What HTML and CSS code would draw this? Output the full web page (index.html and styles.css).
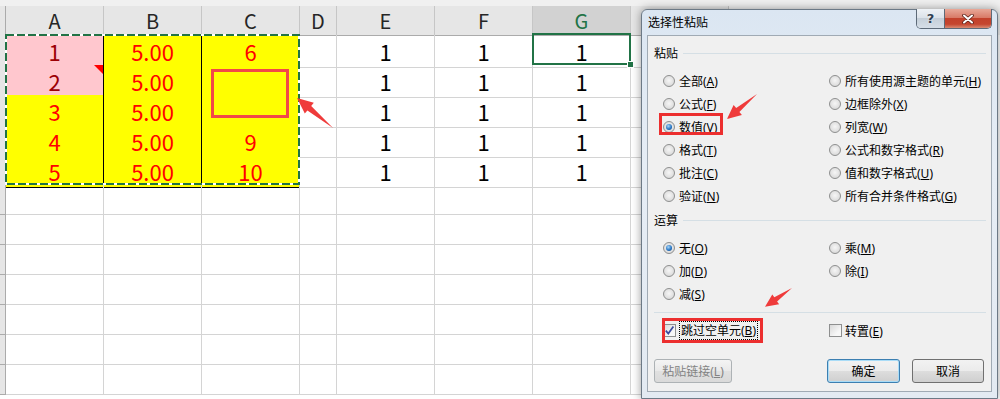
FILE: index.html
```html
<!DOCTYPE html>
<html lang="zh-CN">
<head>
  <meta charset="UTF-8" />
  <title>选择性粘贴</title>
  <link rel="stylesheet" href="styles.css">
</head>
<body>
  <div class="sheet">
    <div class="row head">
      <div class="rh"></div><div>A</div><div>B</div><div>C</div><div>D</div><div>E</div><div>F</div><div class="sel">G</div><div></div>
    </div>
    <div class="row">
      <div class="rh"></div><div class="p">1</div><div class="y">5.00</div><div class="y">6</div><div></div><div>1</div><div>1</div><div class="cur">1</div><div></div>
    </div>
    <div class="row">
      <div class="rh"></div><div class="p note">2</div><div class="y">5.00</div><div class="y"></div><div></div><div>1</div><div>1</div><div>1</div><div></div>
    </div>
    <div class="row">
      <div class="rh"></div><div class="y">3</div><div class="y">5.00</div><div class="y"></div><div></div><div>1</div><div>1</div><div>1</div><div></div>
    </div>
    <div class="row">
      <div class="rh"></div><div class="y">4</div><div class="y">5.00</div><div class="y">9</div><div></div><div>1</div><div>1</div><div>1</div><div></div>
    </div>
    <div class="row">
      <div class="rh"></div><div class="y">5</div><div class="y">5.00</div><div class="y">10</div><div></div><div>1</div><div>1</div><div>1</div><div></div>
    </div>
    <div class="row"><div class="rh"></div><div></div><div></div><div></div><div></div><div></div><div></div><div></div><div></div></div>
    <div class="row"><div class="rh"></div><div></div><div></div><div></div><div></div><div></div><div></div><div></div><div></div></div>
    <div class="row"><div class="rh"></div><div></div><div></div><div></div><div></div><div></div><div></div><div></div><div></div></div>
    <div class="row"><div class="rh"></div><div></div><div></div><div></div><div></div><div></div><div></div><div></div><div></div></div>
    <div class="row"><div class="rh"></div><div></div><div></div><div></div><div></div><div></div><div></div><div></div><div></div></div>
    <div class="row"><div class="rh"></div><div></div><div></div><div></div><div></div><div></div><div></div><div></div><div></div></div>
    <div class="row"><div class="rh"></div><div></div><div></div><div></div><div></div><div></div><div></div><div></div><div></div></div>
  </div>

  <div class="dlg">
    <div class="dlg-title">
      <span class="dlg-caption">选择性粘贴</span>
      <div class="dlg-ctrl">
        <span class="btn-help">?</span>
        <span class="btn-close">
          <svg width="12" height="10" viewBox="0 0 12 10">
            <path d="M2 1.5 L10 8.5 M10 1.5 L2 8.5" stroke="#5b2219" stroke-width="3.6" stroke-linecap="round"/>
            <path d="M2 1.5 L10 8.5 M10 1.5 L2 8.5" stroke="#fff" stroke-width="2" stroke-linecap="round"/>
          </svg>
        </span>
      </div>
    </div>
    <div class="dlg-body">
      <div class="grp"><span>粘贴</span></div>
      <div class="opts">
        <label class="opt"><i class="radio"></i><span>全部(<u>A</u>)</span></label>
        <label class="opt"><i class="radio"></i><span>所有使用源主题的单元(<u>H</u>)</span></label>
        <label class="opt"><i class="radio"></i><span>公式(<u>F</u>)</span></label>
        <label class="opt"><i class="radio"></i><span>边框除外(<u>X</u>)</span></label>
        <label class="opt"><i class="radio on"></i><span>数值(<u>V</u>)</span></label>
        <label class="opt"><i class="radio"></i><span>列宽(<u>W</u>)</span></label>
        <label class="opt"><i class="radio"></i><span>格式(<u>T</u>)</span></label>
        <label class="opt"><i class="radio"></i><span>公式和数字格式(<u>R</u>)</span></label>
        <label class="opt"><i class="radio"></i><span>批注(<u>C</u>)</span></label>
        <label class="opt"><i class="radio"></i><span>值和数字格式(<u>U</u>)</span></label>
        <label class="opt"><i class="radio"></i><span>验证(<u>N</u>)</span></label>
        <label class="opt"><i class="radio"></i><span>所有合并条件格式(<u>G</u>)</span></label>
      </div>
      <div class="grp grp2"><span>运算</span></div>
      <div class="opts">
        <label class="opt"><i class="radio on"></i><span>无(<u>O</u>)</span></label>
        <label class="opt"><i class="radio"></i><span>乘(<u>M</u>)</span></label>
        <label class="opt"><i class="radio"></i><span>加(<u>D</u>)</span></label>
        <label class="opt"><i class="radio"></i><span>除(<u>I</u>)</span></label>
        <label class="opt"><i class="radio"></i><span>减(<u>S</u>)</span></label>
      </div>
      <div class="sep"></div>
      <div class="opts checks">
        <label class="opt">
          <i class="check">
            <svg width="11" height="11" viewBox="0 0 11 11"><path d="M1.8 5.6 L4.3 8.6 L9.4 1.6" fill="none" stroke="#3b4a9e" stroke-width="1.7"/></svg>
          </i><span class="focus">跳过空单元(<u>B</u>)</span>
        </label>
        <label class="opt"><i class="check"></i><span>转置(<u>E</u>)</span></label>
      </div>
      <div class="btns">
        <span class="btn off"><span>粘贴链接(<u>L</u>)</span></span>
        <span class="btn def">确定</span>
        <span class="btn">取消</span>
      </div>
    </div>
  </div>

  <svg class="marks" width="1000" height="399">
    <!-- copy range -->
    <rect x="6" y="35" width="293" height="149" fill="none" stroke="#fff" stroke-width="2"/>
    <rect x="6" y="35" width="293" height="149" fill="none" stroke="#217346" stroke-width="2" stroke-dasharray="8 3"/>
    <!-- annotations -->
    <rect x="212.5" y="70.5" width="75" height="46" fill="none" stroke="#f24848" stroke-width="3"/>
    <polygon points="333,128 311.2,105.9 313.8,102.8 297,98 304.8,113.6 307.4,110.5" fill="#ef3b3b"/>
    <rect x="660.5" y="114.5" width="61" height="19" fill="none" stroke="#ec2f2f" stroke-width="3"/>
    <polygon points="757,94 739.4,112 741.9,115 727,119 733.6,105.1 736.2,108.1" fill="#ef3b3b"/>
    <rect x="663.5" y="319.5" width="98" height="22" fill="none" stroke="#ec2f2f" stroke-width="3"/>
    <polygon points="792,288 777.1,301.4 779.1,304.2 765,306.7 772.3,294.4 774.3,297.2" fill="#ef3b3b"/>
  </svg>
</body>
</html>
```

FILE: styles.css
```css
body {
  margin: 0;
  width: 1000px;
  height: 399px;
  overflow: hidden;
  position: relative;
  background: #ffffff;
  font-family: "Noto Sans CJK SC", sans-serif;
}

/* spreadsheet */
.row {
  display: grid;
  grid-template-columns: 6px 98px 98px 98px 37px 98px 98px 98px 98px;
  height: 30px;
}

.row > div {
  box-sizing: border-box;
  border-right: 1px solid #d4d4d4;
  border-bottom: 1px solid #d4d4d4;
  display: flex;
  align-items: center;
  justify-content: center;
  font-size: 22px;
  color: #000;
  position: relative;
}

.row > .rh {
  background: #e6e6e6;
  border-right-color: #ababab;
  border-bottom-color: #ababab;
}

.head {
  height: 35px;
  padding-top: 6px;
  box-sizing: border-box;
  background: #f0f0f0;
}

.head > div {
  background: #e6e6e6;
  border-right-color: #c6c6c6;
  border-bottom-color: #ababab;
  font-size: 20px;
  color: #262626;
}

.head > .sel {
  background: #d2d2d2;
  color: #217346;
}

.row > .y {
  background: #ffff00;
  color: #ff0000;
  border-color: #000;
}

.row > .p {
  background: #ffc7ce;
  color: #9c0006;
  border-color: #000;
}

.note::after {
  content: "";
  position: absolute;
  top: 0;
  right: 0;
  border-top: 9px solid #ff0000;
  border-left: 9px solid transparent;
}

.cur::before {
  content: "";
  position: absolute;
  left: -1px;
  top: -2px;
  width: 99px;
  height: 32px;
  box-sizing: border-box;
  border: 2px solid #217346;
  z-index: 2;
}

.cur::after {
  content: "";
  position: absolute;
  left: 94px;
  top: 26px;
  width: 5px;
  height: 5px;
  background: #217346;
  border: 1px solid #fff;
  z-index: 3;
}

/* dialog */
.dlg {
  position: absolute;
  left: 641px;
  top: 9px;
  width: 357px;
  height: 390px;
  box-sizing: border-box;
  border: 1px solid #6c7986;
  border-radius: 6px 6px 0 0;
  padding: 0 5px;
  background: linear-gradient(#dbe6f2, #e6edf5 40%, #e3eaf2);
  box-shadow: 0 0 10px rgba(0, 0, 0, 0.4);
  font-family: "Noto Sans", "Noto Sans CJK SC", sans-serif;
  font-size: 12px;
  z-index: 5;
}

.dlg-title {
  height: 25px;
  display: flex;
  justify-content: space-between;
  align-items: flex-start;
}

.dlg-caption {
  line-height: 25px;
  padding-left: 1px;
  color: #000;
}

.dlg-ctrl {
  display: flex;
  margin-top: -1px;
  border: 1px solid #5d6a78;
  border-top: 0;
  border-radius: 0 0 5px 5px;
  overflow: hidden;
}

.btn-help,
.btn-close {
  height: 19px;
  display: flex;
  align-items: center;
  justify-content: center;
}

.btn-help {
  width: 27px;
  border-right: 1px solid #5d6a78;
  background: linear-gradient(#eef2f6, #dce3ea 45%, #c5cfd9 50%, #d5dee7);
  font-family: "DejaVu Sans", sans-serif;
  font-weight: bold;
  font-size: 13px;
  color: #2f3f52;
  text-shadow: 0 0 2px #fff;
}

.btn-close {
  width: 46px;
  background: linear-gradient(#e8a898, #d97b68 45%, #c3412b 50%, #c5462f 80%, #d98b73);
}

.dlg-body {
  height: 357px;
  box-sizing: border-box;
  border: 1px solid #a0aab4;
  background: #f0f0f0;
  padding-top: 7px;
}

.grp {
  display: flex;
  align-items: center;
  gap: 5px;
  height: 20px;
  padding: 0 5px 0 6px;
}

.grp::after {
  content: "";
  flex: 1;
  height: 1px;
  background: #d5dfe5;
}

.grp2 {
  margin-top: 3px;
}

.opts {
  display: grid;
  grid-template-columns: 166px 1fr;
  padding-left: 15px;
  margin-top: 6px;
}

.opt {
  display: flex;
  align-items: center;
  gap: 4px;
  height: 23px;
  white-space: nowrap;
}

u {
  text-underline-offset: 1px;
}

.radio {
  width: 12px;
  height: 12px;
  box-sizing: border-box;
  border-radius: 50%;
  border: 1px solid #8e8f8f;
  background: radial-gradient(circle at 50% 45%, #f6f6f6 0, #e2e2e2 55%, #cfcfcf 100%);
  display: flex;
  align-items: center;
  justify-content: center;
}

.radio.on::after {
  content: "";
  width: 6px;
  height: 6px;
  border-radius: 50%;
  background: radial-gradient(circle at 40% 35%, #a9d6f7, #2a78c6 55%, #0e3e7a);
}

.sep {
  height: 1px;
  background: #d5dfe5;
  margin: 7px 5px 0 6px;
}

.checks {
  margin-top: 6px;
}

.checks .opt {
  gap: 3px;
}

.check {
  width: 13px;
  height: 13px;
  box-sizing: border-box;
  border: 1px solid #8e8f8f;
  background: linear-gradient(135deg, #d8d8d8, #f7f7f7 70%);
  display: flex;
  align-items: center;
  justify-content: center;
}

.focus {
  border: 1px dotted #000;
  line-height: 17px;
  padding: 0 1px;
}

.btns {
  display: flex;
  margin-top: 17px;
  padding: 0 7px 0 6px;
}

.btn {
  width: 72px;
  height: 24px;
  box-sizing: border-box;
  border: 1px solid #707070;
  border-radius: 3px;
  background: linear-gradient(#f2f2f2, #ebebeb 50%, #dddddd 51%, #cfcfcf);
  display: flex;
  align-items: center;
  justify-content: center;
  color: #000;
  margin-left: 12px;
}

.btn.off {
  width: 78px;
  margin-left: 0;
  border-color: #adb2b5;
  background: linear-gradient(#f4f4f4, #e9e9e9 50%, #e0e0e0 51%, #dadada);
  color: #838383;
}

.btn.def {
  width: 73px;
  margin-left: auto;
  border-color: #3c7fb1;
  box-shadow: inset 0 0 0 1px #a9dcf7;
}

.marks {
  position: absolute;
  left: 0;
  top: 0;
  pointer-events: none;
  z-index: 10;
}
```
